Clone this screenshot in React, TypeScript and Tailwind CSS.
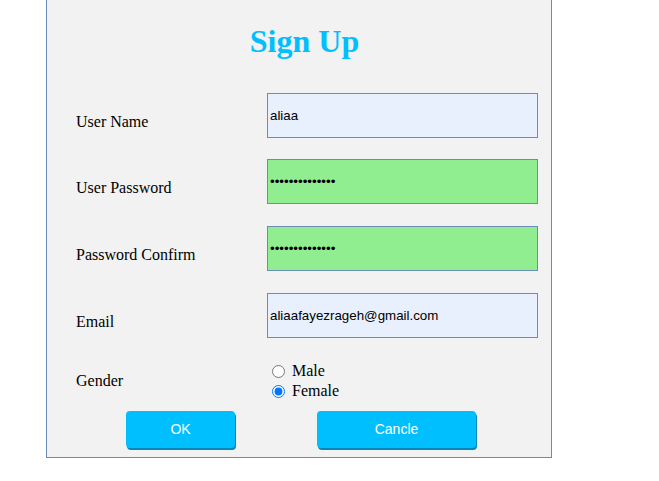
import React from "react";

const inputBase =
  "box-border h-[45px] w-[271px] border border-[#6b8cb5] pl-[2px] text-[13.33px] text-black outline-none [font-family:'Liberation_Sans',Arial,sans-serif]";

function Row({ label, children }: { label: string; children: React.ReactNode }) {
  return (
    <div className="flex items-start">
      <div className="mt-[20px] w-[191px] text-[16px] leading-[18px] text-black">{label}</div>
      {children}
    </div>
  );
}

export default function App() {
  return (
    <div className="min-h-[481px] w-[659px] bg-white [font-family:'Liberation_Serif','Times_New_Roman',serif]">
      <div className="ml-[46px] box-border h-[458px] w-[506px] border-x border-b border-[#6b8cb5] bg-[#f2f2f2]">
        <h1 className="pl-[11px] pt-[23px] text-center text-[32px] font-bold leading-[37px] text-[#00bfff]">
          Sign Up
        </h1>
        <div className="mt-[33px] flex flex-col gap-[21px] pl-[29px]">
          <Row label="User Name">
            <input className={`${inputBase} bg-[#e8f0fe]`} defaultValue="aliaa" />
          </Row>
          <Row label="User Password">
            <input type="password" className={`${inputBase} bg-[#90ee90]`} defaultValue="aliaafayez1234" />
          </Row>
          <div className="pt-[1px]">
            <Row label="Password Confirm">
              <input type="password" className={`${inputBase} bg-[#90ee90]`} defaultValue="aliaafayez1234" />
            </Row>
          </div>
          <div className="pt-[1px]">
            <Row label="Email">
              <input className={`${inputBase} bg-[#e8f0fe]`} defaultValue="aliaafayezrageh@gmail.com" />
            </Row>
          </div>
        </div>
        <div className="mt-[23px] flex items-start pl-[29px]">
          <div className="mt-[11px] w-[191px] text-[16px] leading-[18px] text-black">Gender</div>
          <div className="flex flex-col text-[16px] leading-[20px] text-black">
            <label className="flex items-center">
              <input type="radio" name="g" className="ml-[5px] mr-[7px] h-[13px] w-[13px]" />
              Male
            </label>
            <label className="flex items-center">
              <input type="radio" name="g" defaultChecked className="ml-[5px] mr-[7px] h-[13px] w-[13px]" />
              Female
            </label>
          </div>
        </div>
        <div className="mt-[10px] flex">
          <button className="ml-[79px] h-[37px] w-[109px] rounded-[4px] bg-[#00bfff] text-[14px] text-white shadow-[1px_2px_0_#0089b8] [font-family:'Liberation_Sans',Arial,sans-serif]">
            OK
          </button>
          <button className="ml-[82px] h-[37px] w-[159px] rounded-[4px] bg-[#00bfff] text-[14px] text-white shadow-[1px_2px_0_#0089b8] [font-family:'Liberation_Sans',Arial,sans-serif]">
            Cancle
          </button>
        </div>
      </div>
    </div>
  );
}
